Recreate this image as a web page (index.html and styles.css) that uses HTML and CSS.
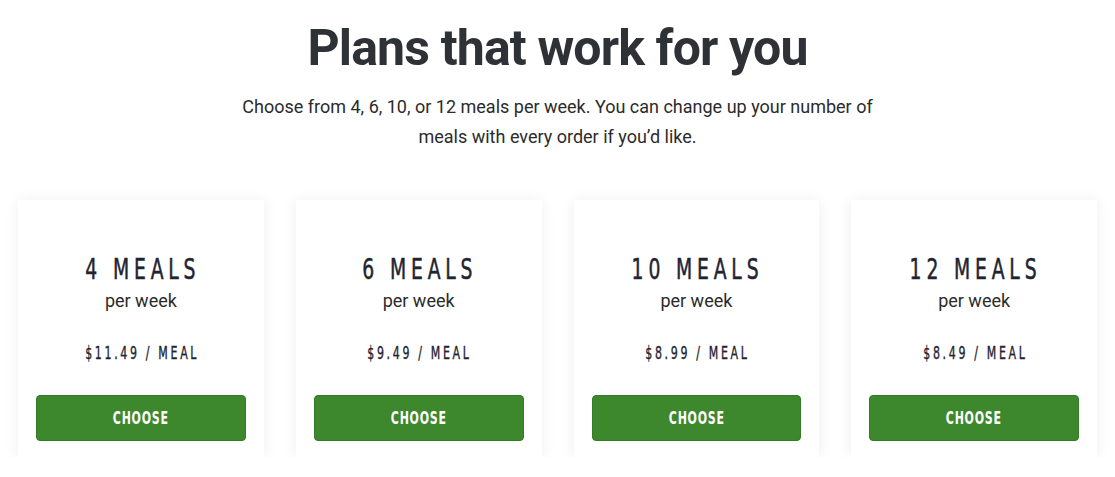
FILE: index.html
```html
<!DOCTYPE html>
<html>
<head>
<meta charset="utf-8">
<link rel="stylesheet" href="styles.css">
</head>
<body>
<section class="plans">
  <h1 class="title">Plans that work for you</h1>
  <p class="lead">Choose from 4, 6, 10, or 12 meals per week. You can change up your number of meals with every order if you’d like.</p>
  <div class="cards">
    <div class="card">
      <div class="count"><span class="narrow">4 MEALS</span></div>
      <div class="per">per week</div>
      <div class="price"><span class="narrow">$11.49 / MEAL</span></div>
      <button class="choose"><span class="narrow">CHOOSE</span></button>
    </div>
    <div class="card">
      <div class="count"><span class="narrow">6 MEALS</span></div>
      <div class="per">per week</div>
      <div class="price"><span class="narrow">$9.49 / MEAL</span></div>
      <button class="choose"><span class="narrow">CHOOSE</span></button>
    </div>
    <div class="card">
      <div class="count"><span class="narrow">10 MEALS</span></div>
      <div class="per">per week</div>
      <div class="price"><span class="narrow">$8.99 / MEAL</span></div>
      <button class="choose"><span class="narrow">CHOOSE</span></button>
    </div>
    <div class="card">
      <div class="count"><span class="narrow">12 MEALS</span></div>
      <div class="per">per week</div>
      <div class="price"><span class="narrow">$8.49 / MEAL</span></div>
      <button class="choose"><span class="narrow">CHOOSE</span></button>
    </div>
  </div>
</section>
</body>
</html>
```

FILE: styles.css
```css
html, body {
  margin: 0;
  padding: 0;
  background: #ffffff;
}
body {
  font-family: Roboto, "Liberation Sans", sans-serif;
  color: #2d3136;
}
.plans {
  padding: 18px 18px 0;
  display: flex;
  flex-direction: column;
  align-items: center;
}
.title {
  margin: 0;
  font-size: 50px;
  line-height: 60px;
  font-weight: 700;
  color: #2e3237;
  letter-spacing: -0.85px;
}
.lead {
  margin: 14px 0 0;
  max-width: 640px;
  text-align: center;
  font-size: 18px;
  line-height: 30px;
  color: #2b2b2b;
}
.cards {
  margin-top: 48px;
  width: 100%;
  display: grid;
  grid-template-columns: repeat(4, 1fr);
  gap: 32px;
}
.card {
  background: #fff;
  box-shadow: 0 1px 14px rgba(0, 0, 0, 0.07);
  padding: 52px 18px 16px;
  display: flex;
  flex-direction: column;
  align-items: center;
}
.narrow {
  display: inline-block;
  transform: scaleX(0.72);
  white-space: nowrap;
}
.count {
  font-family: "DejaVu Sans Condensed", "DejaVu Sans", sans-serif;
  font-size: 29px;
  line-height: 34px;
  letter-spacing: 6.7px;
  color: #1f2530;
  text-align: center;
  -webkit-text-stroke: 0.5px #1f2530;
}
.count .narrow {
  margin-right: -3px;
}
.per {
  margin-top: 4px;
  font-size: 18px;
  line-height: 22px;
  color: #2b2b2b;
}
.price {
  margin-top: 31px;
  font-family: "DejaVu Sans Condensed", "DejaVu Sans", sans-serif;
  font-size: 17px;
  line-height: 20px;
  letter-spacing: 3.7px;
  color: #1f2530;
  text-align: center;
  -webkit-text-stroke: 0.35px #1f2530;
}
.price .narrow {
  margin-right: -2px;
}
.choose {
  margin-top: 32px;
  width: 100%;
  height: 46px;
  padding: 0;
  border: 1px solid #357a27;
  border-radius: 4px;
  background: #3d872d;
  color: #fff;
  font-family: "DejaVu Sans Condensed", "DejaVu Sans", sans-serif;
  font-weight: 700;
  font-size: 17px;
  letter-spacing: 1px;
  cursor: pointer;
}
```
